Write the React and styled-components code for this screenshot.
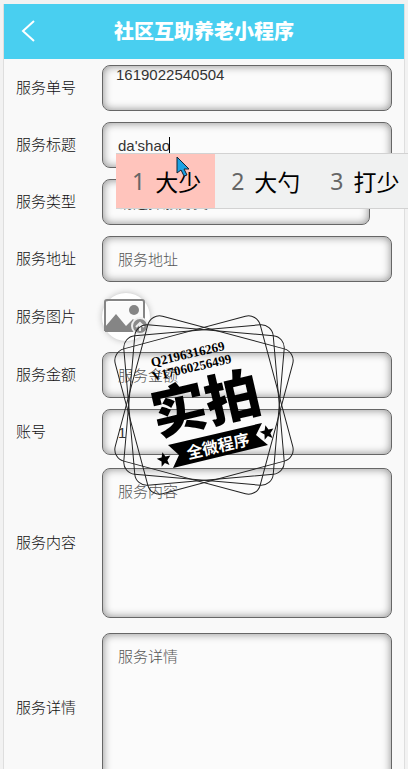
import React, { useState } from "react";
import styled, { createGlobalStyle, css } from "styled-components";

const GlobalStyle = createGlobalStyle`
  * {
    box-sizing: border-box;
  }

  html {
    scrollbar-width: none;
  }

  body {
    margin: 0;
    background: #f2f2f2;
    color: #111;
    font-family: "Liberation Sans", "Noto Sans CJK SC", sans-serif;
    font-size: 15px;
    font-weight: 300;
  }
`;

const Page = styled.div`
  margin: 4px 3px 0;
  border: 1px solid #dedede;
  border-width: 0 1px;
  background: #f9f9f9;
`;

const Header = styled.header`
  display: grid;
  grid-template-columns: 48px 1fr 48px;
  align-items: center;
  height: 55px;
  background: #49cff0;
  color: #fff;
`;

const BackButton = styled.button`
  display: flex;
  justify-content: center;
  padding: 0;
  border: 0;
  background: none;
  color: inherit;
`;

const Title = styled.h1`
  margin: 0;
  text-align: center;
  font-size: 20px;
  line-height: 28px;
  font-weight: 900;
`;

const Form = styled.form`
  position: relative;
  display: flex;
  flex-direction: column;
  gap: 11px;
  padding: 6px 12px 12px;
`;

const Row = styled.div`
  display: grid;
  grid-template-columns: 86px 1fr;
  align-items: center;
  padding: ${(props) => (props.$tall ? "2px 0" : "0")};
`;

const Label = styled.label`
  line-height: 20px;
`;

const Field = styled.div`
  position: relative;
  display: flex;
  padding-right: ${(props) => (props.$short ? "22px" : "0")};
`;

const box = css`
  display: block;
  width: 100%;
  margin: 0;
  border: 1px solid #666;
  border-radius: 8px;
  background: #fbfbfb;
  box-shadow: inset 0 0 8px #888;
  color: #333;
  font: inherit;
  outline: none;

  &::placeholder {
    color: #555;
    opacity: 1;
  }
`;

const Input = styled.input`
  ${box}
  height: 46px;
  padding: ${(props) => (props.$top ? "0 13px 28px" : "0 15px")};
`;

const Select = styled.select`
  ${box}
  height: 46px;
  padding: 0 15px;
  color: #000;
  appearance: none;
`;

const TextArea = styled.textarea`
  ${box}
  height: 150px;
  padding: 12px 15px;
  line-height: 22px;
  resize: none;
`;

const Upload = styled.button`
  width: 48px;
  height: 48px;
  padding: 0;
  border: 0;
  border-radius: 50%;
  background: #fff;
  box-shadow: 0 0 6px #bbb;
`;

const Caret = styled.span`
  position: absolute;
  top: 15px;
  left: 67px;
  width: 1px;
  height: 16px;
  background: #000;
`;

const Candidates = styled.div`
  position: absolute;
  z-index: 2;
  top: 31px;
  left: 14px;
  right: -16px;
  display: flex;
  height: 56px;
  overflow: hidden;
  border: 1px solid #d2d2d2;
  border-width: 1px 0;
  background: #f0f1f1;
`;

const Candidate = styled.button`
  display: flex;
  flex: none;
  align-items: center;
  gap: 10px;
  padding: 0 14px 0 16px;
  border: 0;
  background: ${(props) => (props.$active ? "#ffc4bc" : "none")};
  color: #000;
  font: 400 23px "Noto Sans", "Noto Sans CJK SC", sans-serif;
`;

const Num = styled.span`
  color: #666;
`;

const Pointer = styled.svg`
  position: absolute;
  z-index: 3;
  top: 34px;
  left: 74px;
`;

const Stamp = styled.svg`
  position: absolute;
  z-index: 1;
  top: 251px;
  left: 105px;
  pointer-events: none;
`;

const words = ["大少", "大勺", "打少"];

const star = "M0 -7 L2 -2 L7 -2 L3 2 L4 7 L0 4 L-4 7 L-3 2 L-7 -2 L-2 -2 Z";

const FormStamp = () => (
  <Stamp width="190" height="190" viewBox="-95 -95 190 190">
    {[15, 5, -5, -15].map((angle) => (
      <rect
        key={angle}
        x="-75"
        y="-75"
        width="150"
        height="150"
        rx="12"
        fill="none"
        stroke="#222"
        transform={`rotate(${angle})`}
      />
    ))}
    <g transform="rotate(-13)" fontFamily="Liberation Serif" fontWeight="700">
      <text x="-42" y="-49" fontSize="13">
        Q2196316269
      </text>
      <text x="-44" y="-35" fontSize="13">
        V17060256499
      </text>
      <text
        x="2"
        y="19"
        fontSize="55"
        fontWeight="900"
        textAnchor="middle"
        fontFamily="Noto Sans CJK SC"
      >
        实拍
      </text>
    </g>
    <path d="M-36 40 L58 18 L52 30 L64 40 L-31 63 L-25 50 Z" />
    <text
      x="14"
      y="47"
      fontSize="16"
      fontWeight="700"
      textAnchor="middle"
      fontFamily="Noto Sans CJK SC"
      fill="#fff"
      transform="rotate(-13 14 41)"
    >
      全微程序
    </text>
    <path d={star} transform="translate(-40 54) rotate(-13)" />
    <path d={star} transform="translate(63 27) rotate(-13)" />
  </Stamp>
);

const PictureIcon = () => (
  <svg width="48" height="48" viewBox="0 0 48 48">
    <path d="M3 9h38v28H3z" fill="#fafafa" />
    <path d="M3 38V9a2 2 0 0 1 2-2h35a2 2 0 0 1 2 2v18" fill="none" stroke="#858585" strokeWidth="2" />
    <circle cx="32" cy="17" r="5" fill="#858585" />
    <path d="M3 39V34L14 21l10 12 7-7 6 6v7z" fill="#858585" />
    <circle cx="38" cy="33" r="8" fill="#8a8a8a" stroke="#eee" strokeWidth="2" />
    <path d="M34 34l4-4 4 4M38 30v8" fill="none" stroke="#eee" strokeWidth="2" />
  </svg>
);

export default function App() {
  const [title, setTitle] = useState("da'shao");
  const [account, setAccount] = useState("1");

  return (
    <>
      <GlobalStyle />
      <Page>
        <Header>
          <BackButton type="button" aria-label="返回">
            <svg width="16" height="24" viewBox="0 0 16 24">
              <path d="M14 1L3 11l11 10" fill="none" stroke="#fff" strokeWidth="2" />
            </svg>
          </BackButton>
          <Title>社区互助养老小程序</Title>
        </Header>
        <Form>
          <Row>
            <Label htmlFor="number">服务单号</Label>
            <Field>
              <Input id="number" $top readOnly value="1619022540504" />
            </Field>
          </Row>
          <Row>
            <Label htmlFor="title">服务标题</Label>
            <Field>
              <Input
                id="title"
                value={title}
                onChange={(e) => setTitle(e.target.value)}
              />
              <Caret />
              <Candidates>
                {words.map((word, i) => (
                  <Candidate
                    key={word}
                    type="button"
                    $active={i === 0}
                    onClick={() => setTitle(word)}
                  >
                    <Num>{i + 1}</Num>
                    {word}
                  </Candidate>
                ))}
              </Candidates>
              <Pointer width="14" height="22" viewBox="0 0 14 22">
                <path
                  d="M1 1v16l4-3 3 6 3-1-3-6h5z"
                  fill="#1ba1e2"
                  stroke="#123"
                />
              </Pointer>
            </Field>
          </Row>
          <Row>
            <Label htmlFor="type">服务类型</Label>
            <Field $short>
              <Select id="type">
                <option>请选择服务类型</option>
              </Select>
            </Field>
          </Row>
          <Row>
            <Label htmlFor="address">服务地址</Label>
            <Field>
              <Input id="address" placeholder="服务地址" />
            </Field>
          </Row>
          <Row>
            <Label htmlFor="picture">服务图片</Label>
            <Field>
              <Upload id="picture" type="button">
                <PictureIcon />
              </Upload>
            </Field>
          </Row>
          <Row>
            <Label htmlFor="amount">服务金额</Label>
            <Field>
              <Input id="amount" placeholder="服务金额" />
            </Field>
          </Row>
          <Row>
            <Label htmlFor="account">账号</Label>
            <Field>
              <Input
                id="account"
                value={account}
                onChange={(e) => setAccount(e.target.value)}
              />
            </Field>
          </Row>
          <Row $tall>
            <Label htmlFor="content">服务内容</Label>
            <Field>
              <TextArea id="content" placeholder="服务内容" />
            </Field>
          </Row>
          <Row $tall>
            <Label htmlFor="detail">服务详情</Label>
            <Field>
              <TextArea id="detail" placeholder="服务详情" />
            </Field>
          </Row>
          <FormStamp />
        </Form>
      </Page>
    </>
  );
}
